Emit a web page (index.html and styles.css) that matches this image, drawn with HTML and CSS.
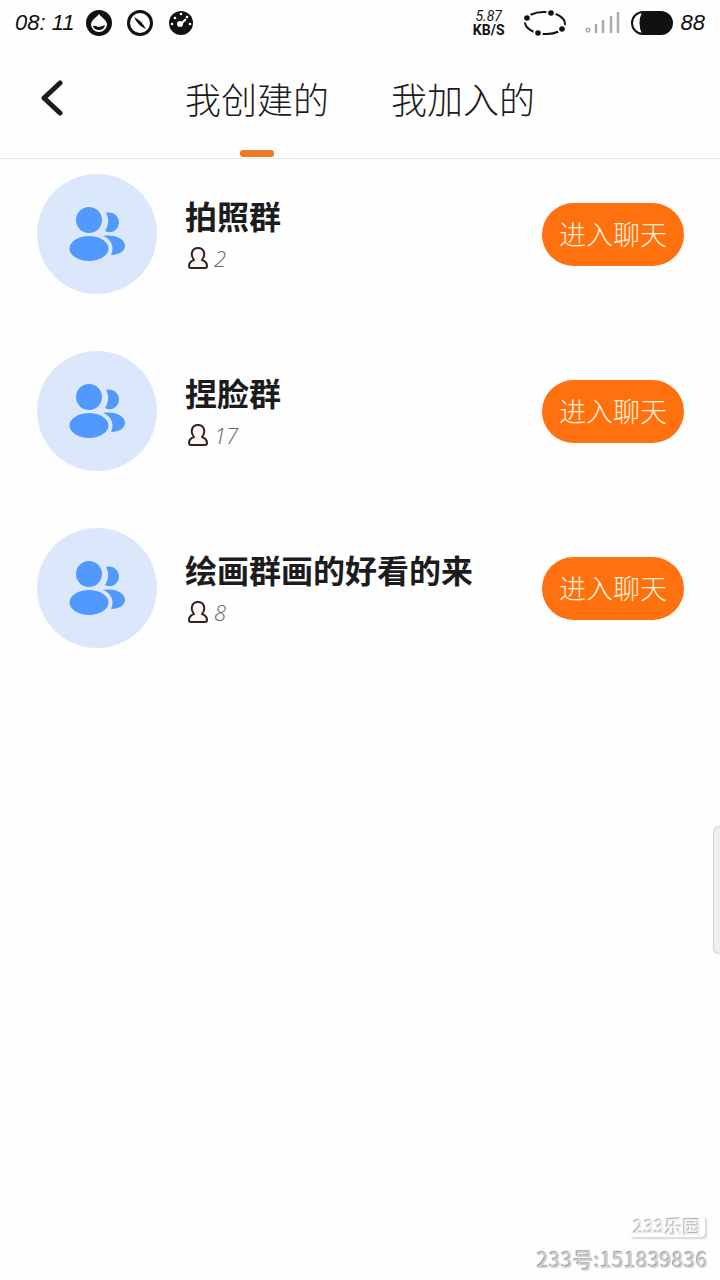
FILE: index.html
```
<!DOCTYPE html>
<html lang="zh-CN">
<head>
    <meta charset="UTF-8">
    <meta name="viewport" content="width=device-width, initial-scale=1.0">
    <title>我创建的</title>
    <link rel="stylesheet" href="styles.css">
</head>
<body>

<!-- shared icons -->
<svg class="sprite" width="0" height="0" aria-hidden="true">
    <symbol id="icon-group" viewBox="0 0 56 56">
        <circle cx="20" cy="14" r="13"/>
        <ellipse cx="20" cy="42.500" rx="19.500" ry="12.500"/>
        <path d="M37 7C44 5 50 10 50 16.500C50 23 43 29 36 25C40 19 40 12 37 7Z"/>
        <path d="M34 30C46 28 56 33 56 40C56 45 50 49 42 49C46 41 42 33 34 30Z"/>
    </symbol>
    <symbol id="icon-member" viewBox="0 0 22 24">
        <path d="M7 14C3 9 4.500 2 11 2S19 9 15 14C18 15 20 17 20 20Q20 22 18 22H4Q2 22 2 20C2 17 4 15 7 14Z" fill="#fff4f0" stroke="#2a2424" stroke-width="2" stroke-linejoin="round"/>
    </symbol>
</svg>

<div class="status-bar">
    <span class="clock">08: 11</span>
    <svg class="status-icon" viewBox="0 0 26 26" aria-hidden="true">
        <circle cx="13" cy="13" r="13"/>
        <path d="M13 4C15 7 21 10 21 14.500A8 7.500 0 0 1 5 14.500C5 10 11 7 13 4Z" fill="#fff"/>
        <path d="M7 16Q9 15 12 17Q15 17 19 15Q18 20 13 20Q8 20 7 16Z"/>
    </svg>
    <svg class="status-icon" viewBox="0 0 26 26" aria-hidden="true">
        <circle cx="13" cy="13" r="11.500" fill="#fff" stroke="#111" stroke-width="3"/>
        <path d="M7 7Q14 10 19 19Q11 16 7 7Z"/>
    </svg>
    <svg class="status-icon" viewBox="0 0 26 26" aria-hidden="true">
        <circle cx="13" cy="13" r="12"/>
        <path d="M12 15L18 9" stroke="#fff" stroke-width="2"/>
        <circle cx="12" cy="14" r="3" fill="#fff"/>
        <g fill="#fff">
            <circle cx="4" cy="14" r="1.300"/>
            <circle cx="7" cy="8" r="1.300"/>
            <circle cx="13" cy="4" r="1.300"/>
            <circle cx="19" cy="7" r="1.300"/>
            <circle cx="22" cy="14" r="1.300"/>
        </g>
    </svg>

    <div class="status-right">
        <div class="speed">
            <span class="speed-value">5.87</span>
            <span class="speed-unit">KB/S</span>
        </div>
        <svg width="44" height="28" viewBox="0 0 44 28" aria-hidden="true">
            <ellipse cx="22" cy="14" rx="20" ry="11" fill="none" stroke="#111" stroke-width="2" transform="rotate(3 22 14)"/>
            <g stroke="#fefefe" stroke-width="2">
                <circle cx="4" cy="9" r="3.800"/>
                <circle cx="28" cy="4" r="3.800"/>
                <circle cx="39" cy="20" r="3.800"/>
                <circle cx="15" cy="24" r="3.800"/>
            </g>
        </svg>
        <svg class="signal" width="36" height="22" viewBox="0 0 36 22" aria-hidden="true">
            <circle cx="3" cy="18" r="1.800" fill="none" stroke="#aaa" stroke-width="1.500"/>
            <path d="M11 20V13M18 20V9M26 20V5M33 20V1" stroke="#aaa" stroke-width="2.500" stroke-linecap="round"/>
        </svg>
        <svg width="42" height="24" viewBox="0 0 42 24" aria-hidden="true">
            <rect x="1" y="1" width="40" height="22" rx="11" fill="#fff" stroke="#111" stroke-width="2"/>
            <path d="M11 1H30A11 11 0 0 1 30 23H11Q6 12 11 1Z"/>
        </svg>
        <span class="battery">88</span>
    </div>
</div>

<header>
    <button class="back" aria-label="返回">
        <svg width="22" height="36" viewBox="0 0 22 36" aria-hidden="true">
            <path d="M19 3L3 18L19 33" fill="none" stroke="#1c1c1e" stroke-width="5" stroke-linecap="round" stroke-linejoin="round"/>
        </svg>
    </button>
    <nav class="tabs">
        <a href="#" class="tab active">我创建的</a>
        <a href="#" class="tab">我加入的</a>
    </nav>
</header>

<main class="group-list">
    <div class="group">
        <div class="avatar"><svg><use href="#icon-group"/></svg></div>
        <div class="group-info">
            <h2>拍照群</h2>
            <p><svg><use href="#icon-member"/></svg>2</p>
        </div>
        <button class="enter">进入聊天</button>
    </div>
    <div class="group">
        <div class="avatar"><svg><use href="#icon-group"/></svg></div>
        <div class="group-info">
            <h2>捏脸群</h2>
            <p><svg><use href="#icon-member"/></svg>17</p>
        </div>
        <button class="enter">进入聊天</button>
    </div>
    <div class="group">
        <div class="avatar"><svg><use href="#icon-group"/></svg></div>
        <div class="group-info">
            <h2>绘画群画的好看的来</h2>
            <p><svg><use href="#icon-member"/></svg>8</p>
        </div>
        <button class="enter">进入聊天</button>
    </div>
</main>

<div class="side-handle"></div>

<div class="watermark">
    <span class="brand">233乐园</span>
    <span class="user-id">233号:151839836</span>
</div>

</body>
</html>
```
FILE: styles.css
```
* {
    margin: 0;
    padding: 0;
    box-sizing: border-box;
}

body {
    min-height: 100vh;
    font-family: "Noto Sans CJK SC", sans-serif;
    background: #fefefe;
    color: #1c1c1e;
}

button {
    border: none;
    background: none;
    font-family: inherit;
    cursor: pointer;
}

svg {
    display: block;
    flex-shrink: 0;
}

.sprite {
    position: absolute;
}

/* status bar */
.status-bar {
    display: flex;
    align-items: center;
    height: 46px;
    padding: 0 15px;
    color: #111;
    fill: #111;
}

.clock,
.battery {
    font-family: "Liberation Sans", sans-serif;
    font-size: 22px;
    font-style: italic;
    line-height: 28px;
}

.clock {
    margin-right: 11px;
    white-space: nowrap;
}

.status-icon {
    width: 26px;
    height: 26px;
    margin-right: 15px;
}

.status-right {
    display: flex;
    align-items: center;
    margin-left: auto;
}

.speed {
    display: flex;
    flex-direction: column;
    align-items: center;
    margin-right: 18px;
    font-family: Roboto, sans-serif;
    font-size: 14px;
    line-height: 14px;
}

.speed-value {
    font-style: italic;
}

.speed-unit {
    font-weight: 700;
}

.signal {
    margin: 0 10px 0 18px;
}

.battery {
    margin-left: 8px;
}

/* header */
header {
    display: grid;
    grid-template-columns: 1fr auto 1fr;
    height: 113px;
    border-bottom: 1px solid #e6e6e6;
}

.back {
    justify-self: start;
    align-self: start;
    padding: 34px 20px 34px 41px;
}

.tabs {
    display: flex;
    gap: 62px;
}

.tab {
    position: relative;
    padding-top: 28px;
    font-size: 36px;
    font-weight: 300;
    line-height: 48px;
    color: #1c1c1e;
    text-decoration: none;
}

.tab.active::after {
    content: "";
    position: absolute;
    left: 50%;
    bottom: 1px;
    width: 34px;
    height: 7px;
    border-radius: 3px;
    background: #ee7a26;
    transform: translateX(-50%);
}

/* group list */
.group-list {
    display: flex;
    flex-direction: column;
    gap: 57px;
    padding: 15px 36px 15px 37px;
}

.group {
    display: flex;
    align-items: center;
}

.avatar {
    display: flex;
    justify-content: center;
    align-items: center;
    width: 120px;
    height: 120px;
    flex-shrink: 0;
    margin-right: 28px;
    border-radius: 50%;
    background: #dbe8fc;
}

.avatar svg {
    width: 56px;
    height: 56px;
    fill: #5199fc;
}

.group-info {
    flex: 1;
    min-width: 0;
}

.group-info h2 {
    margin-bottom: 10px;
    font-size: 32px;
    font-weight: 700;
    line-height: 38px;
}

.group-info p {
    display: flex;
    align-items: center;
    gap: 5px;
    font-family: "Open Sans", sans-serif;
    font-size: 22px;
    font-style: italic;
    font-weight: 300;
    line-height: 28px;
    color: #666;
}

.group-info p svg {
    width: 22px;
    height: 24px;
    margin-left: 2px;
}

.enter {
    width: 142px;
    height: 63px;
    flex-shrink: 0;
    border-radius: 32px;
    background: #ff700f;
    color: #fff3dc;
    font-size: 27px;
    font-weight: 300;
    line-height: 40px;
}

/* overlays */
.side-handle {
    position: fixed;
    right: 0;
    bottom: 326px;
    width: 7px;
    height: 128px;
    border: 1px solid #d0d0d0;
    border-right: none;
    border-radius: 6px 0 0 6px;
    background: #f1eff2;
}

.watermark {
    position: fixed;
    right: 12px;
    bottom: 7px;
    display: flex;
    flex-direction: column;
    align-items: flex-end;
    gap: 8px;
    color: #fff;
}

.brand {
    margin-right: 3px;
    padding: 0 4px;
    border-radius: 4px;
    background: #fefefe;
    box-shadow: 2px 2px 2px #d8d8d8;
    font-size: 18px;
    font-weight: 700;
    line-height: 22px;
    color: #f2f2f2;
    text-shadow: -1px -1px 1px #aaa;
}

.user-id {
    font-size: 21px;
    font-weight: 500;
    line-height: 28px;
    color: #d2d2d2;
    text-shadow: -1px -1px 1px #999;
}
```
